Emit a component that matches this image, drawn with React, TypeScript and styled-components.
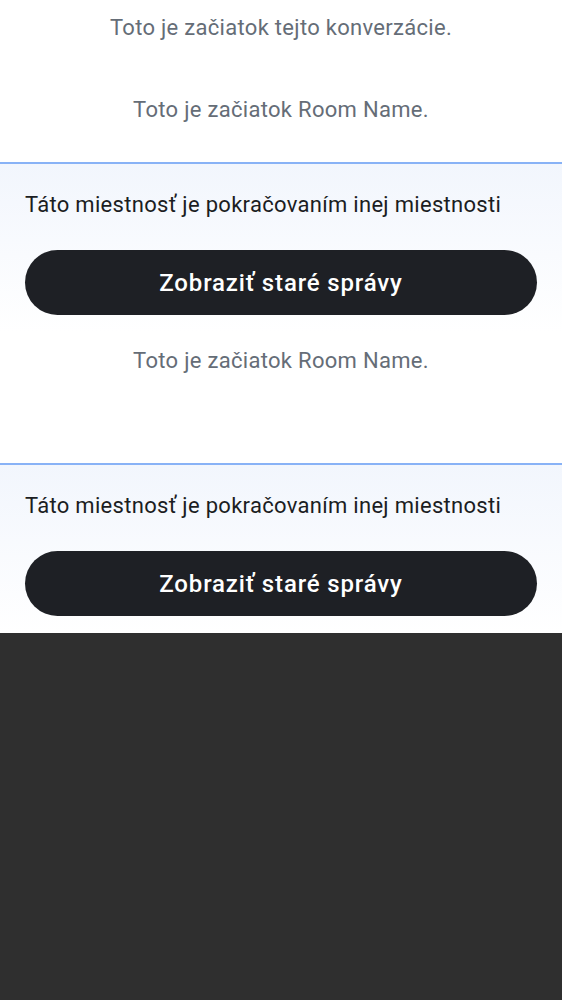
import React from "react";
import styled, { createGlobalStyle } from "styled-components";

const GlobalStyle = createGlobalStyle`
  html, body {
    margin: 0;
    padding: 0;
    background: #2f2f2f;
  }
  body {
    font-family: Roboto, "Noto Sans", sans-serif;
  }
`;

const Timeline = styled.div`
  background: #ffffff;
  display: flex;
  flex-direction: column;
`;

const StartNotice = styled.p<{ $top: number; $bottom: number }>`
  margin: 0;
  padding: ${(p) => p.$top}px 16px ${(p) => p.$bottom}px;
  text-align: center;
  font-size: 22px;
  line-height: 26px;
  color: #656d77;
  letter-spacing: 0.3px;
`;

const Banner = styled.section`
  border-top: 2px solid #88b2f6;
  background: linear-gradient(180deg, #f2f6fd 0%, #ffffff 100%);
  padding: 28px 25px 17px;
  display: flex;
  flex-direction: column;
  gap: 32px;
`;

const BannerText = styled.p`
  margin: 0;
  font-size: 22px;
  line-height: 26px;
  color: #1b1d22;
  letter-spacing: 0.3px;
`;

const OldMessagesButton = styled.button`
  height: 65px;
  width: 100%;
  border: none;
  border-radius: 33px;
  background: #1e2025;
  color: #ffffff;
  font-family: Roboto, "Noto Sans", sans-serif;
  font-size: 24px;
  font-weight: 500;
  letter-spacing: 0.85px;
  cursor: pointer;
`;

export default function App() {
  return (
    <>
      <GlobalStyle />
      <Timeline>
        <StartNotice $top={15} $bottom={56}>
          Toto je začiatok tejto konverzácie.
        </StartNotice>
        <StartNotice $top={0} $bottom={39}>
          Toto je začiatok Room Name.
        </StartNotice>
        <Banner>
          <BannerText>Táto miestnosť je pokračovaním inej miestnosti</BannerText>
          <OldMessagesButton>Zobraziť staré správy</OldMessagesButton>
        </Banner>
        <StartNotice $top={16} $bottom={89}>
          Toto je začiatok Room Name.
        </StartNotice>
        <Banner>
          <BannerText>Táto miestnosť je pokračovaním inej miestnosti</BannerText>
          <OldMessagesButton>Zobraziť staré správy</OldMessagesButton>
        </Banner>
      </Timeline>
    </>
  );
}
